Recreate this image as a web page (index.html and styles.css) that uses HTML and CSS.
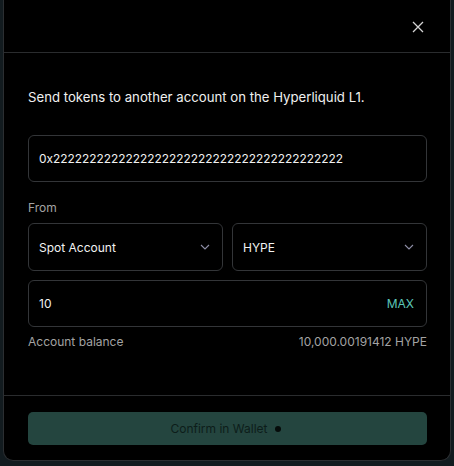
FILE: index.html
```html
<!DOCTYPE html>
<html>
<head>
<meta charset="utf-8">
<link rel="stylesheet" href="styles.css">
</head>
<body>
<div class="modal">
  <div class="modal-header">
    <button class="close" aria-label="Close">
      <svg width="12" height="12" viewBox="0 0 12 12"><path d="M1 1L11 11M11 1L1 11" stroke="#d4d4d4" stroke-width="1.3" fill="none"/></svg>
    </button>
  </div>
  <div class="modal-body">
    <p class="intro">Send tokens to another account on the Hyperliquid L1.</p>
    <div class="field address">0x2222222222222222222222222222222222222222</div>
    <div class="label">From</div>
    <div class="selects">
      <div class="field select"><span>Spot Account</span>
        <svg width="10" height="6" viewBox="0 0 10 6"><path d="M1 1L5 5L9 1" stroke="#8e8ea6" stroke-width="1.1" fill="none"/></svg>
      </div>
      <div class="field select"><span>HYPE</span>
        <svg width="10" height="6" viewBox="0 0 10 6"><path d="M1 1L5 5L9 1" stroke="#8e8ea6" stroke-width="1.1" fill="none"/></svg>
      </div>
    </div>
    <div class="field amount"><span>10</span><span class="max">MAX</span></div>
    <div class="balance"><span>Account balance</span><span>10,000.00191412 HYPE</span></div>
  </div>
  <div class="modal-footer">
    <button class="confirm">Confirm in Wallet <span class="dot"></span></button>
  </div>
</div>
</body>
</html>
```
FILE: styles.css
```css
* { box-sizing: border-box; }
html, body { margin: 0; padding: 0; }
body {
  background: #121b1f;
  font-family: Inter, "Noto Sans", sans-serif;
  color: #f2f2f2;
  width: 454px;
  height: 466px;
  overflow: hidden;
}
.modal {
  margin: 0 3px;
  background: #000;
  border: 1px solid #2b2e31;
  border-top: none;
  border-radius: 0 0 10px 10px;
  height: 461px;
  display: flex;
  flex-direction: column;
}
.modal-header {
  height: 53px;
  border-bottom: 1px solid #2a2c2e;
  display: flex;
  align-items: center;
  justify-content: flex-end;
  padding: 0 26px 0 0;
}
.close {
  background: none;
  border: none;
  padding: 0;
  width: 12px;
  height: 12px;
  display: flex;
  margin-top: 1px;
}
.modal-body {
  padding: 34px 23px 0 24px;
  flex: 1;
}
.intro {
  margin: 0;
  font-size: 13.2px;
  line-height: 20px;
  color: #f0f0f0;
}
.field {
  border: 1px solid #333538;
  border-radius: 6px;
  height: 47px;
  display: flex;
  align-items: center;
  padding: 0 12px 0 10px;
  font-size: 12px;
  color: #f2f2f2;
}
.address { margin-top: 28px; font-size: 11.9px; }
.label {
  margin-top: 17px;
  font-size: 12px;
  line-height: 18px;
  color: #a3a3a3;
}
.selects {
  margin-top: 6px;
  display: grid;
  grid-template-columns: 1fr 1fr;
  gap: 9px;
}
.select {
  height: 48px;
  justify-content: space-between;
  padding-right: 12px;
}
.amount {
  margin-top: 9px;
  justify-content: space-between;
  padding-right: 12px;
}
.max { color: #5cc6b8; }
.balance {
  margin-top: 6px;
  display: flex;
  justify-content: space-between;
  font-size: 12px;
  line-height: 18px;
  color: #a3a3a3;
}
.modal-footer {
  border-top: 1px solid #2a2c2e;
  padding: 16px 23px 15px 24px;
}
.confirm {
  width: 100%;
  height: 33px;
  border: none;
  border-radius: 5px;
  background: #24453f;
  color: #0d1d1a;
  font-family: Inter, "Noto Sans", sans-serif;
  font-size: 12px;
  display: flex;
  align-items: center;
  justify-content: center;
  gap: 7px;
  padding: 0 4px 0 0;
}
.dot {
  width: 6px;
  height: 6px;
  border-radius: 50%;
  background: #050b0a;
  display: inline-block;
}
```
